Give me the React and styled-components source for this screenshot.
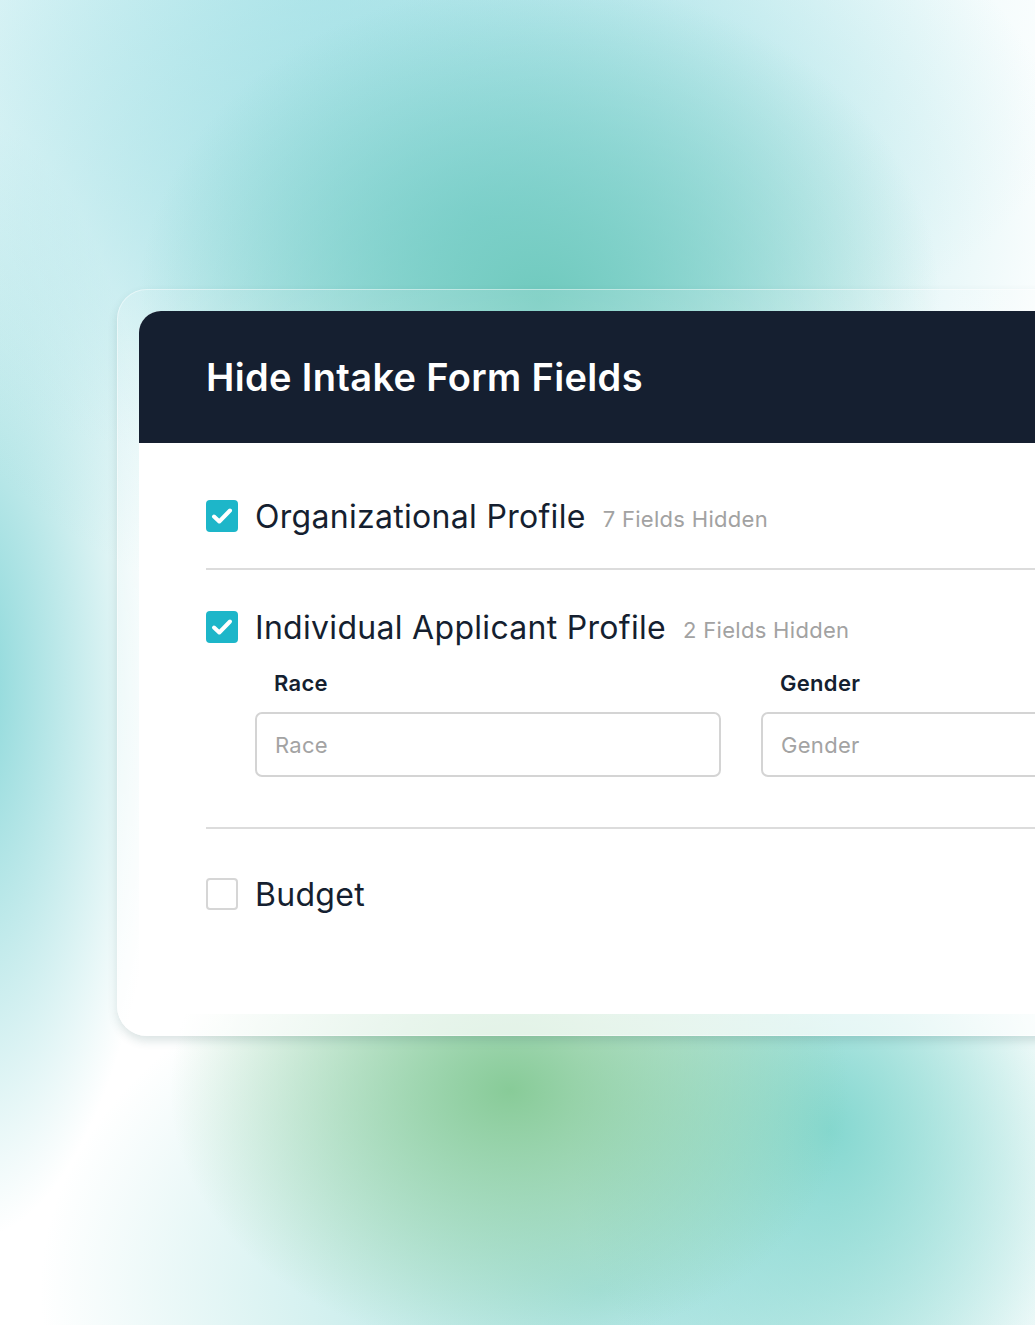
import React from 'react';
import styled, { createGlobalStyle } from 'styled-components';

const GlobalStyle = createGlobalStyle`
    html, body {
        margin: 0;
        padding: 0;
    }
    body {
        font-family: Inter, "Noto Sans", sans-serif;
        background: #ffffff;
    }
`

const Page = styled.div`
    width: 1035px;
    height: 1325px;
    overflow: hidden;
    box-sizing: border-box;
    padding: 289px 0 0 117px;
    background:
        radial-gradient(ellipse 400px 320px at 540px 300px, rgba(112, 202, 190, 1), rgba(112, 202, 190, 0) 100%),
        radial-gradient(ellipse 600px 430px at 480px 220px, rgba(140, 216, 222, 0.9), rgba(140, 216, 222, 0) 100%),
        radial-gradient(ellipse 800px 480px at 320px -20px, rgba(192, 235, 239, 1), rgba(192, 235, 239, 0) 100%),
        radial-gradient(ellipse 200px 560px at -30px 680px, rgba(128, 212, 214, 0.95), rgba(128, 212, 214, 0) 100%),
        radial-gradient(ellipse 340px 260px at 510px 1090px, rgba(136, 203, 152, 1), rgba(136, 203, 152, 0) 100%),
        radial-gradient(ellipse 260px 320px at 830px 1130px, rgba(128, 214, 206, 0.95), rgba(128, 214, 206, 0) 100%),
        radial-gradient(ellipse 560px 380px at 600px 1290px, rgba(168, 226, 224, 1), rgba(168, 226, 224, 0) 100%),
        #ffffff;
`

const Frame = styled.div`
    width: 1000px;
    box-sizing: border-box;
    padding: 22px;
    border-radius: 30px;
    background: linear-gradient(180deg, rgba(255, 255, 255, 0.14) 0%, rgba(255, 255, 255, 0.45) 45%, rgba(255, 255, 255, 0.72) 100%);
    box-shadow:
        inset 0 0 0 1px rgba(255, 255, 255, 0.45),
        0 5px 10px rgba(30, 90, 85, 0.16);
`

const Card = styled.div`
    border-radius: 22px;
    background: #ffffff;
    overflow: hidden;
    height: 703px;
`

const Header = styled.div`
    height: 132px;
    background: #151f30;
    display: flex;
    align-items: center;
    padding-left: 67px;
`

const Title = styled.h1`
    margin: 0;
    color: #ffffff;
    font-size: 38px;
    font-weight: 600;
    letter-spacing: 0.35px;
`

const Body = styled.div`
    padding: 0 0 0 67px;
`

const Section = styled.div`
    padding: ${p => p.$top}px 0 ${p => p.$bottom}px;
    border-bottom: ${p => (p.$last ? 'none' : '2px solid #dcdcdc')};
`

const Row = styled.div`
    display: flex;
    align-items: center;
    height: 40px;
`

const Box = styled.span`
    flex: none;
    width: 32px;
    height: 32px;
    box-sizing: border-box;
    border-radius: 4px;
    display: flex;
    align-items: center;
    justify-content: center;
    background: ${p => (p.$checked ? '#1db6c9' : '#ffffff')};
    border: ${p => (p.$checked ? 'none' : '2px solid #d6d6d6')};
`

const Name = styled.span`
    margin-left: 17px;
    font-size: 32px;
    color: #151f30;
    letter-spacing: 0.3px;
`

const Hidden = styled.span`
    margin-left: 17px;
    margin-top: 6px;
    font-size: 22px;
    color: #a2a2a2;
    letter-spacing: 0.3px;
`

const Fields = styled.div`
    display: grid;
    grid-template-columns: 466px 466px;
    column-gap: 40px;
    padding-left: 49px;
    margin-top: 23px;
`

const Field = styled.div`
    display: flex;
    flex-direction: column;
`

const Label = styled.label`
    font-size: 22px;
    font-weight: 600;
    color: #151f30;
    padding-left: 19px;
    margin-bottom: 16px;
    letter-spacing: 0.3px;
`

const Input = styled.input`
    height: 65px;
    box-sizing: border-box;
    border: 2px solid #d4d4d4;
    border-radius: 7px;
    padding: 0 18px;
    font-family: Inter, "Noto Sans", sans-serif;
    font-size: 22px;
    outline: none;

    &::placeholder {
        color: #a3a3a3;
        letter-spacing: 0.3px;
    }
`

const Check = () => (
    <svg width="22" height="18" viewBox="0 0 22 18" fill="none">
        <path d="M3 9.5 L8.3 14.5 L19 3.5" stroke="#ffffff" strokeWidth="4" strokeLinecap="round" strokeLinejoin="round" />
    </svg>
)

const Item = ({ checked, name, hidden }) => (
    <Row>
        <Box $checked={checked}>{checked && <Check />}</Box>
        <Name>{name}</Name>
        {hidden && <Hidden>{hidden}</Hidden>}
    </Row>
)

const App = () => (
    <Page>
        <GlobalStyle />
        <Frame>
            <Card>
                <Header>
                    <Title>Hide Intake Form Fields</Title>
                </Header>
                <Body>
                    <Section $top={53} $bottom={32}>
                        <Item checked name="Organizational Profile" hidden="7 Fields Hidden" />
                    </Section>
                    <Section $top={37} $bottom={50}>
                        <Item checked name="Individual Applicant Profile" hidden="2 Fields Hidden" />
                        <Fields>
                            <Field>
                                <Label>Race</Label>
                                <Input placeholder="Race" />
                            </Field>
                            <Field>
                                <Label>Gender</Label>
                                <Input placeholder="Gender" />
                            </Field>
                        </Fields>
                    </Section>
                    <Section $top={45} $bottom={0} $last>
                        <Item name="Budget" />
                    </Section>
                </Body>
            </Card>
        </Frame>
    </Page>
)

export default App;
